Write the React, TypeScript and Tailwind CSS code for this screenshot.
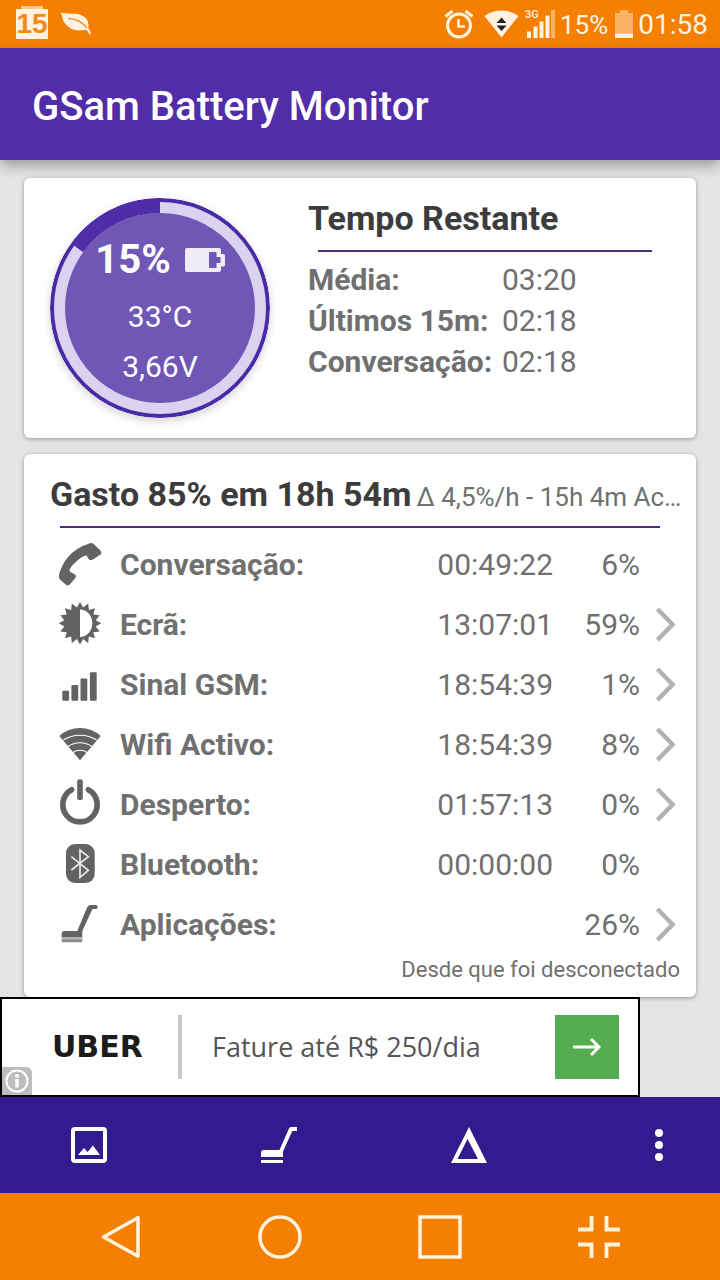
import type { ReactNode } from "react";

function sunburst(cx: number, cy: number, points: number, outer: number, inner: number) {
  return Array.from({ length: points * 2 }, (_, i) => {
    const r = i % 2 === 0 ? outer : inner;
    const a = (i * Math.PI) / points - Math.PI / 2;
    return `${(cx + r * Math.cos(a)).toFixed(2)},${(cy + r * Math.sin(a)).toFixed(2)}`;
  }).join(" ");
}

function RowIcon({ children }: { children: ReactNode }) {
  return (
    <svg aria-hidden="true" viewBox="0 0 44 48" className="block h-12 w-11 overflow-visible" fill="#636363">
      {children}
    </svg>
  );
}

const icons = {
  phone: (
    <RowIcon>
      <path d="M32 2.2Q34 1.6 35.500 3L42.500 9.500Q44 11.500 42.500 13.500L34.500 18.800Q32 19.800 30.300 17.800L28.700 14.500Q26.500 14 22.500 17Q13.500 24 11.300 29L12 30.700L17 33.500Q18.800 34.800 17.500 36.800L11.500 43.700Q9.800 45 8 43.800L1.800 38.300Q.5 36.500 1 33.500Q3.500 24 10 16Q18 6.500 32 2.200Z" />
    </RowIcon>
  ),
  screen: (
    <RowIcon>
      <polygon points={sunburst(22, 22.3, 16, 21.3, 16)} />
      <path d="M22 8.600A12.300 13.700 0 0 1 22 36Z" fill="#fff" />
    </RowIcon>
  ),
  signal: (
    <RowIcon>
      <rect x="4.300" y="29.700" width="6.800" height="10" rx="1" />
      <rect x="13.400" y="24" width="6.800" height="15.700" rx="1" />
      <rect x="22.500" y="17.500" width="6.800" height="22.200" rx="1" />
      <rect x="31.900" y="11.300" width="6.800" height="28.400" rx="1" />
    </RowIcon>
  ),
  wifi: (
    <RowIcon>
      <path d="M22 39.300L1.300 15Q10 7 22 7Q34 7 42.700 15Z" />
      <g fill="none" stroke="#fff" strokeWidth="1.100">
        <path d="M5.300 19Q12.500 14.200 22 14.200Q31.500 14.200 38.700 19" />
        <path d="M10 25.500Q15.500 21.800 22 21.800Q28.500 21.800 34 25.500" />
        <path d="M15 31.500Q18.300 29.300 22 29.300Q25.700 29.300 29 31.500" />
      </g>
    </RowIcon>
  ),
  power: (
    <RowIcon>
      <g fill="none" stroke="#636363" strokeWidth="5.600" strokeLinecap="round">
        <path d="M13.600 8.700A17.200 17.200 0 1 0 30.400 8.700" />
        <path d="M22 1V16.500" />
      </g>
    </RowIcon>
  ),
  bluetooth: (
    <RowIcon>
      <rect x="8" y="3" width="28.700" height="39" rx="9" />
      <path d="M13.300 15.700L30.300 29.300L22 36.300V9L30.300 15.700L13.300 29" fill="none" stroke="#e8e8e8" strokeWidth="1.700" />
    </RowIcon>
  ),
  apps: (
    <RowIcon>
      <path d="M3.700 36.500V32.500Q3.700 30 6.500 30H19.300L28.800 7Q30 4 33 4H38Q39.700 4 39.700 6Q39.700 8 38 8H34.500L24.300 30V36.500Z" />
      <path d="M3.700 36.500H24.300V39H3.700Z" fill="#b5b5b5" />
      <path d="M3.700 38.500H24.300V40Q24 41.300 23 41.300H5Q3.900 41.300 3.700 40Z" fill="#8a8a8a" />
    </RowIcon>
  ),
};

const usage = [
  { icon: icons.phone, label: "Conversação:", time: "00:49:22", pct: "6%", more: false },
  { icon: icons.screen, label: "Ecrã:", time: "13:07:01", pct: "59%", more: true },
  { icon: icons.signal, label: "Sinal GSM:", time: "18:54:39", pct: "1%", more: true },
  { icon: icons.wifi, label: "Wifi Activo:", time: "18:54:39", pct: "8%", more: true },
  { icon: icons.power, label: "Desperto:", time: "01:57:13", pct: "0%", more: true },
  { icon: icons.bluetooth, label: "Bluetooth:", time: "00:00:00", pct: "0%", more: false },
  { icon: icons.apps, label: "Aplicações:", time: "", pct: "26%", more: true },
];

const remaining = [
  ["Média:", "03:20"],
  ["Últimos 15m:", "02:18"],
  ["Conversação:", "02:18"],
];

function StatusBar() {
  return (
    <div className="flex h-12 items-center bg-[#f57f00] pl-4 pr-3 text-[#fff3e0]">
      <div className="relative h-[30px] w-8 bg-[#fff3e0] text-center font-['Liberation_Sans',sans-serif] text-[28px] leading-[30px] font-bold text-[#f08a1d]">
        <span className="absolute -top-[3px] left-[5px] h-[3px] w-[22px] bg-[#fbc98c]" />
        <span className="-mx-1">15</span>
      </div>
      <svg aria-hidden="true" viewBox="0 0 32 24" className="ml-3 h-6 w-8" fill="#fff3e0">
        <path d="M.7 .7Q8 1.500 18.300 2Q26.500 4.500 28 10.300Q29 13.500 28.300 16.300Q30.500 18.500 31 22L29.300 22.500Q28.500 19.500 26 17.700Q17 19.500 11.700 17Q5.500 13.500 3.300 8.700Q2.500 4 .7 .7Z" />
        <path d="M8.300 6.300Q20 7 27 15.800" fill="none" stroke="#f57f00" strokeWidth="1.200" />
      </svg>
      <div className="ml-auto flex items-center">
        <svg aria-hidden="true" viewBox="0 0 30 30" className="h-[30px] w-[30px]" fill="none" stroke="#fff3e0" strokeWidth="3">
          <circle cx="15" cy="16.500" r="11.500" />
          <path d="M14.500 10V17.500H21" strokeWidth="2.500" />
          <path d="M1.500 7.500L8.500 2M28.500 7.500L21.500 2" />
        </svg>
        <svg aria-hidden="true" viewBox="0 0 35 28" className="ml-[10px] h-7 w-[35px]">
          <path d="M.5 6Q8 .5 17.500 .5Q27 .5 34.500 6L17.500 27.500Z" fill="#fff3e0" />
          <path d="M17.500 7.500L22.500 13H12.500ZM17.500 21L22.500 15.500H12.500Z" fill="#222" />
        </svg>
        <div className="relative ml-[6px] h-[30px] w-[30px]">
          <svg aria-hidden="true" viewBox="0 0 30 30" className="h-[30px] w-[30px]" fill="#fff3e0">
            <path d="M2 22.500H6V29H2ZM8.500 17.500H12.500V29H8.500ZM14.500 12.500H18.500V29H14.500ZM20.500 6.500H24.500V29H20.500Z" />
            <path d="M26 1H30V29H26Z" opacity=".45" />
          </svg>
          <span className="absolute top-0 left-0 text-[11px] leading-[12px] font-medium">3G</span>
        </div>
        <span className="ml-[5px] pt-[2px] text-[26px] leading-8">15%</span>
        <svg aria-hidden="true" viewBox="0 0 18 28" className="ml-[7px] h-7 w-[18px]" fill="#fff3e0">
          <path d="M5 0H13V3H18V23.500H0V3H5Z" opacity=".45" />
          <path d="M0 23.500H18V28H0Z" />
        </svg>
        <span className="ml-[5px] pt-[2px] text-[28px] leading-8">01:58</span>
      </div>
    </div>
  );
}

function Gauge() {
  return (
    <div className="relative h-[220px] w-[220px] shrink-0">
      <svg aria-hidden="true" viewBox="0 0 220 220" className="absolute inset-0 h-full w-full rounded-full shadow-[0_3px_8px_rgba(0,0,0,0.18)]">
        <circle cx="110" cy="110" r="110" fill="#4b2aa5" />
        <circle cx="110" cy="110" r="106" fill="#dad2ef" />
        <circle cx="110" cy="110" r="95" fill="#7057b6" />
        <path d="M110 0A110 110 0 0 0 21.010 45.340L33.140 54.160A95 95 0 0 1 110 15Z" fill="#4f2ca8" />
      </svg>
      <div className="relative flex flex-col items-center pt-[38px] text-[30px] text-white">
        <div className="flex h-12 items-center gap-[14px] text-[40px] font-bold">
          15%
          <svg aria-hidden="true" viewBox="0 0 40 24" className="h-6 w-10" fill="#f1edf8">
            <path fillRule="evenodd" d="M2 0H34Q36 0 36 2V6H38.500Q40 6 40 7.500V17Q40 18.500 38.500 18.500H36V22Q36 24 34 24H2Q0 24 0 22V2Q0 0 2 0ZM24 4V20H31.500V15H35.500V9H31.500V4Z" />
          </svg>
        </div>
        <div className="mt-2 leading-[50px]">33°C</div>
        <div className="leading-[50px]">3,66V</div>
      </div>
    </div>
  );
}

export default function App() {
  return (
    <div className="flex min-h-screen flex-col bg-[#e4e4e4] font-[Roboto,sans-serif] text-[#707070]">
      <StatusBar />
      <header className="flex h-28 items-center bg-[#512da8] px-8 pt-[6px] shadow-[0_6px_12px_rgba(0,0,0,0.3)]">
        <h1 className="text-[40px] leading-[48px] font-medium text-white">GSam Battery Monitor</h1>
      </header>

      <main className="flex flex-1 flex-col gap-4 px-6 pt-[18px]">
        <section className="flex gap-[38px] rounded-md bg-white py-5 pr-[34px] pl-[26px] shadow-[0_1px_4px_rgba(0,0,0,0.35)]">
          <Gauge />
          <div className="min-w-0 flex-1">
            <h2 className="text-[34px] leading-10 font-bold text-[#3c3c3c]">Tempo Restante</h2>
            <div className="mx-[10px] mt-3 mb-[7px] h-[2px] bg-[#4a3080]" />
            <table className="text-[30px] leading-[41px]">
              <tbody>
                {remaining.map(([label, value]) => (
                  <tr key={label}>
                    <th scope="row" className="w-[194px] p-0 text-left font-bold">{label}</th>
                    <td className="p-0">{value}</td>
                  </tr>
                ))}
              </tbody>
            </table>
          </div>
        </section>

        <section className="rounded-md bg-white pt-5 pr-4 pb-3 pl-[26px] shadow-[0_1px_4px_rgba(0,0,0,0.35)]">
          <div className="flex h-10 items-baseline gap-[5px] leading-10 whitespace-nowrap">
            <h2 className="text-[34px] font-bold text-[#3c3c3c]">Gasto 85% em 18h 54m</h2>
            <span className="text-[26px]">Δ 4,5%/h - 15h 4m Ac…</span>
          </div>
          <div className="mt-3 mr-5 mb-[7px] ml-[10px] h-[2px] bg-[#4a3080]" />
          <table className="w-full text-[30px] leading-9">
            <tbody>
              {usage.map((row) => (
                <tr key={row.label} className="h-[60px]">
                  <td className="w-[70px] py-0 pr-0 pl-2">{row.icon}</td>
                  <th scope="row" className="p-0 text-left font-bold">{row.label}</th>
                  <td className="p-0 text-right">{row.time}</td>
                  <td className="w-[87px] p-0 text-right">{row.pct}</td>
                  <td className="w-10 p-0">
                    {row.more && (
                      <button type="button" aria-label={row.label} className="flex h-[60px] w-10 items-center pl-[15px]">
                        <svg aria-hidden="true" viewBox="0 0 22 36" className="h-9 w-[22px]" fill="none" stroke="#b2b2b2" strokeWidth="4.500">
                          <path d="M2.500 2L17.500 17.500L2.500 33" />
                        </svg>
                      </button>
                    )}
                  </td>
                </tr>
              ))}
            </tbody>
          </table>
          <p className="text-right text-[22px] leading-[30px]">Desde que foi desconectado</p>
        </section>
      </main>

      <a href="#uber" className="relative flex h-[100px] w-full max-w-[640px] items-center border-2 border-black bg-white pr-[19px] pl-[50px]">
        <span className="w-[126px] font-['DejaVu_Sans',sans-serif] text-[30px] leading-9 font-bold text-[#1c1c1c]">UBER</span>
        <span className="h-16 w-1 bg-[#c9c9c9]" />
        <span className="ml-[30px] font-['Open_Sans',sans-serif] text-[27px] leading-9 text-[#555]">Fature até R$ 250/dia</span>
        <span className="ml-auto flex h-16 w-16 items-center justify-center bg-[#55ad52]">
          <svg aria-hidden="true" viewBox="0 0 28 20" className="h-5 w-7" fill="none" stroke="#fff" strokeWidth="3">
            <path d="M0 10H26M18 2L26 10L18 18" />
          </svg>
        </span>
        <span className="absolute bottom-0 left-0 flex h-7 w-[30px] items-center justify-center rounded-tr-md bg-[#bdbdbd]">
          <svg aria-hidden="true" viewBox="0 0 24 24" className="h-6 w-6" fill="none" stroke="#fff" strokeWidth="2">
            <circle cx="12" cy="12" r="10.500" />
            <path d="M12 10V18.500M12 5V8.500" strokeWidth="3.500" />
          </svg>
        </span>
      </a>

      <div className="flex h-24 items-center justify-between bg-[#311b8f] pr-[13px] pl-[41px]">
        <button type="button" aria-label="Gráfico" className="flex h-24 w-24 items-center justify-center">
          <svg aria-hidden="true" viewBox="0 0 36 36" className="h-9 w-9" fill="#fff">
            <path fillRule="evenodd" d="M4 0H32Q36 0 36 4V32Q36 36 32 36H4Q0 36 0 32V4Q0 0 4 0ZM4 4V32H32V4Z" />
            <path d="M7 28L13 21L16.500 25L22 18.500L29 28Z" />
          </svg>
        </button>
        <button type="button" aria-label="Aplicações" className="flex h-24 w-24 items-center justify-center">
          <svg aria-hidden="true" viewBox="0 0 36 36" className="h-9 w-9" fill="#fff">
            <path d="M0 30V26Q0 23 3 23H18.500L28 1.500Q28.500 0 30 0H36V4H31.300L22 24.500V30ZM0 33H22V36H0Z" />
          </svg>
        </button>
        <button type="button" aria-label="Δ" className="flex h-24 w-24 items-center justify-center">
          <svg aria-hidden="true" viewBox="0 0 36 36" className="h-9 w-9" fill="#fff">
            <path fillRule="evenodd" d="M18 0L36 36H0ZM16.500 12L6.500 32H27Z" />
          </svg>
        </button>
        <button type="button" aria-label="Menu" className="flex h-24 w-24 items-center justify-center">
          <svg aria-hidden="true" viewBox="0 0 36 36" className="h-9 w-9" fill="#fff">
            <circle cx="18" cy="6" r="4" />
            <circle cx="18" cy="18" r="4" />
            <circle cx="18" cy="30" r="4" />
          </svg>
        </button>
      </div>

      <nav className="flex h-[87px] items-center justify-between bg-[#f57f00] px-[81px]">
        <button type="button" aria-label="Voltar" className="flex h-20 w-20 items-center justify-center">
          <svg aria-hidden="true" viewBox="0 0 44 44" className="h-11 w-11" fill="none" stroke="#fff3dc" strokeWidth="3.500">
            <path d="M4.500 22L39 2.700V41.300Z" strokeLinejoin="round" />
          </svg>
        </button>
        <button type="button" aria-label="Início" className="flex h-20 w-20 items-center justify-center">
          <svg aria-hidden="true" viewBox="0 0 44 44" className="h-11 w-11" fill="none" stroke="#fff3dc" strokeWidth="3.500">
            <circle cx="22" cy="22" r="20" />
          </svg>
        </button>
        <button type="button" aria-label="Recentes" className="flex h-20 w-20 items-center justify-center">
          <svg aria-hidden="true" viewBox="0 0 44 44" className="h-11 w-11" fill="none" stroke="#fff3dc" strokeWidth="3.500">
            <rect x="2" y="2" width="40" height="40" />
          </svg>
        </button>
        <button type="button" aria-label="Reduzir" className="flex h-20 w-20 items-center justify-center">
          <svg aria-hidden="true" viewBox="0 0 44 44" className="h-11 w-11" fill="none" stroke="#fff3dc" strokeWidth="3.800">
            <path d="M14.500 1V14.500H1M29.500 1V14.500H43M14.500 43V29.500H1M29.500 43V29.500H43" />
          </svg>
        </button>
      </nav>
    </div>
  );
}
